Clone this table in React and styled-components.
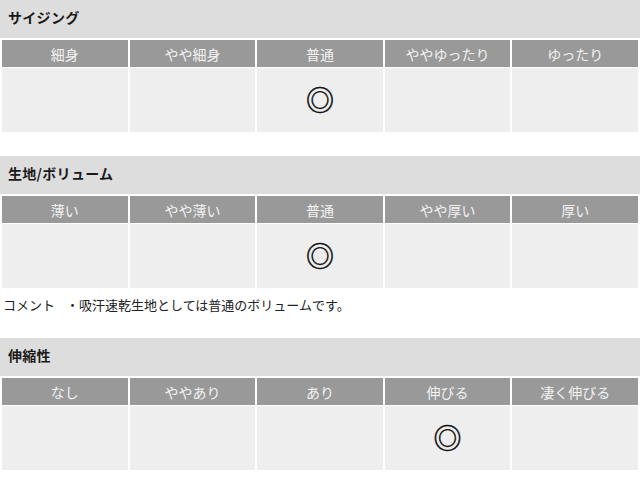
import React from "react";
import styled, { createGlobalStyle } from "styled-components";

const GlobalStyle = createGlobalStyle`
  html, body {
    margin: 0;
    padding: 0;
    background: #fff;
  }
  body {
    font-family: "Noto Sans CJK JP", "Noto Sans", sans-serif;
    color: #333;
  }
`;

const Page = styled.div`
  width: 640px;
  display: flex;
  flex-direction: column;
`;

const Section = styled.section`
  display: flex;
  flex-direction: column;
  margin-bottom: ${(p) => p.$gap || 0}px;
`;

const SectionTitle = styled.h3`
  margin: 0;
  height: 38px;
  display: flex;
  align-items: center;
  padding: 0 0 4px 8px;
  box-sizing: border-box;
  background: #dddddd;
  color: #1a1a1a;
  font-size: 14px;
  font-weight: bold;
  letter-spacing: 0.3px;
`;

const Table = styled.table`
  width: 640px;
  table-layout: fixed;
  border-collapse: separate;
  border-spacing: 2px 1px;
  padding: 1px 0;
`;

const HeadCell = styled.th`
  height: 27px;
  padding: 0;
  background: #999999;
  color: #f2f2f2;
  font-size: 14px;
  font-weight: normal;
  text-align: center;
  vertical-align: middle;
`;

const BodyCell = styled.td`
  height: 61px;
  padding: 0 0 3px;
  background: #eeeeee;
  text-align: center;
  vertical-align: middle;
  color: #111;
  font-size: 28px;
  line-height: 1;
  -webkit-text-stroke: 0.5px #111;
`;

const Comment = styled.p`
  margin: 0;
  padding: 6px 0 0 3px;
  height: 48px;
  box-sizing: border-box;
  font-size: 13px;
  line-height: 18px;
  color: #222;
  display: flex;
  gap: 11px;
`;

const sections = [
  {
    title: "サイジング",
    labels: ["細身", "やや細身", "普通", "ややゆったり", "ゆったり"],
    mark: 2,
    gap: 22,
  },
  {
    title: "生地/ボリューム",
    labels: ["薄い", "やや薄い", "普通", "やや厚い", "厚い"],
    mark: 2,
    comment: "・吸汗速乾生地としては普通のボリュームです。",
  },
  {
    title: "伸縮性",
    labels: ["なし", "ややあり", "あり", "伸びる", "凄く伸びる"],
    mark: 3,
  },
];

const RatingTable = ({ labels, mark }) => (
  <Table>
    <thead>
      <tr>
        {labels.map((l) => (
          <HeadCell key={l}>{l}</HeadCell>
        ))}
      </tr>
    </thead>
    <tbody>
      <tr>
        {labels.map((l, i) => (
          <BodyCell key={l}>{i === mark ? "◎" : ""}</BodyCell>
        ))}
      </tr>
    </tbody>
  </Table>
);

export default function App() {
  return (
    <>
      <GlobalStyle />
      <Page>
        {sections.map((s) => (
          <Section key={s.title} $gap={s.gap}>
            <SectionTitle>{s.title}</SectionTitle>
            <RatingTable labels={s.labels} mark={s.mark} />
            {s.comment && (
              <Comment>
                <span>コメント</span>
                <span>{s.comment}</span>
              </Comment>
            )}
          </Section>
        ))}
      </Page>
    </>
  );
}
